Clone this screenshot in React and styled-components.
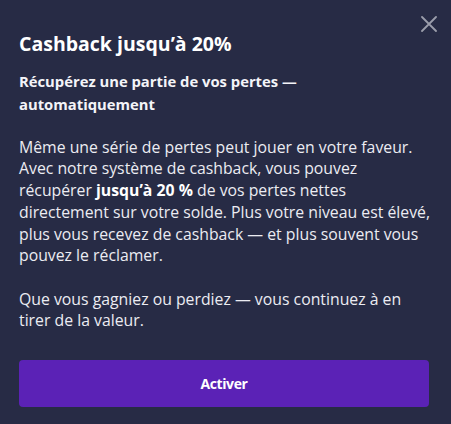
import React from "react";
import styled, { createGlobalStyle } from "styled-components";

const Global = createGlobalStyle`
  html, body {
    margin: 0;
    background: #272b45;
  }
  body {
    font-family: "Open Sans", "Noto Sans", sans-serif;
    -webkit-font-smoothing: antialiased;
  }
`;

const Modal = styled.div`
  position: relative;
  box-sizing: border-box;
  width: 451px;
  height: 424px;
  padding: 30px 22px 17px 19px;
  display: flex;
  flex-direction: column;
  background: #272b45;
  color: #fff;
`;

const CloseButton = styled.button`
  position: absolute;
  top: 14px;
  right: 12px;
  width: 20px;
  height: 20px;
  padding: 0;
  border: 0;
  background: none;
  display: flex;
  align-items: center;
  justify-content: center;
  cursor: pointer;
`;

const Title = styled.h2`
  margin: 0;
  font-size: 19.5px;
  line-height: 27px;
  font-weight: 700;
  color: #ffffff;
`;

const Subtitle = styled.h3`
  margin: 13px 0 0;
  font-size: 14.8px;
  line-height: 22.5px;
  font-weight: 700;
  color: #f4f4f8;
`;

const Body = styled.p`
  margin: 21.7px 0 0;
  font-size: 15.8px;
  line-height: 21.7px;
  font-weight: 400;
  color: #ececf2;
  white-space: nowrap;

  strong {
    font-weight: 700;
    color: #fff;
  }
`;

const ActionButton = styled.button`
  margin-top: 28px;
  height: 47px;
  width: 100%;
  border: 0;
  border-radius: 4px;
  background: #5b22b6;
  color: #fff;
  font-family: inherit;
  font-size: 14px;
  font-weight: 700;
  letter-spacing: -0.4px;
  cursor: pointer;
`;

const CloseIcon = () => (
  <svg width="16" height="16" viewBox="0 0 16 16" fill="none">
    <path d="M1 1L15 15M15 1L1 15" stroke="#9b9dab" strokeWidth="1.8" strokeLinecap="round" />
  </svg>
);

export default function App() {
  return (
    <>
      <Global />
      <Modal>
        <CloseButton aria-label="Fermer">
          <CloseIcon />
        </CloseButton>
        <Title>Cashback jusqu’à 20%</Title>
        <Subtitle>
          Récupérez une partie de vos pertes —<br />
          automatiquement
        </Subtitle>
        <Body>
          Même une série de pertes peut jouer en votre faveur.
          <br />
          Avec notre système de cashback, vous pouvez
          <br />
          récupérer <strong>jusqu’à 20 %</strong> de vos pertes nettes
          <br />
          directement sur votre solde. Plus votre niveau est élevé,
          <br />
          plus vous recevez de cashback — et plus souvent vous
          <br />
          pouvez le réclamer.
          <br />
          <br />
          Que vous gagniez ou perdiez — vous continuez à en
          <br />
          tirer de la valeur.
        </Body>
        <ActionButton>Activer</ActionButton>
      </Modal>
    </>
  );
}
